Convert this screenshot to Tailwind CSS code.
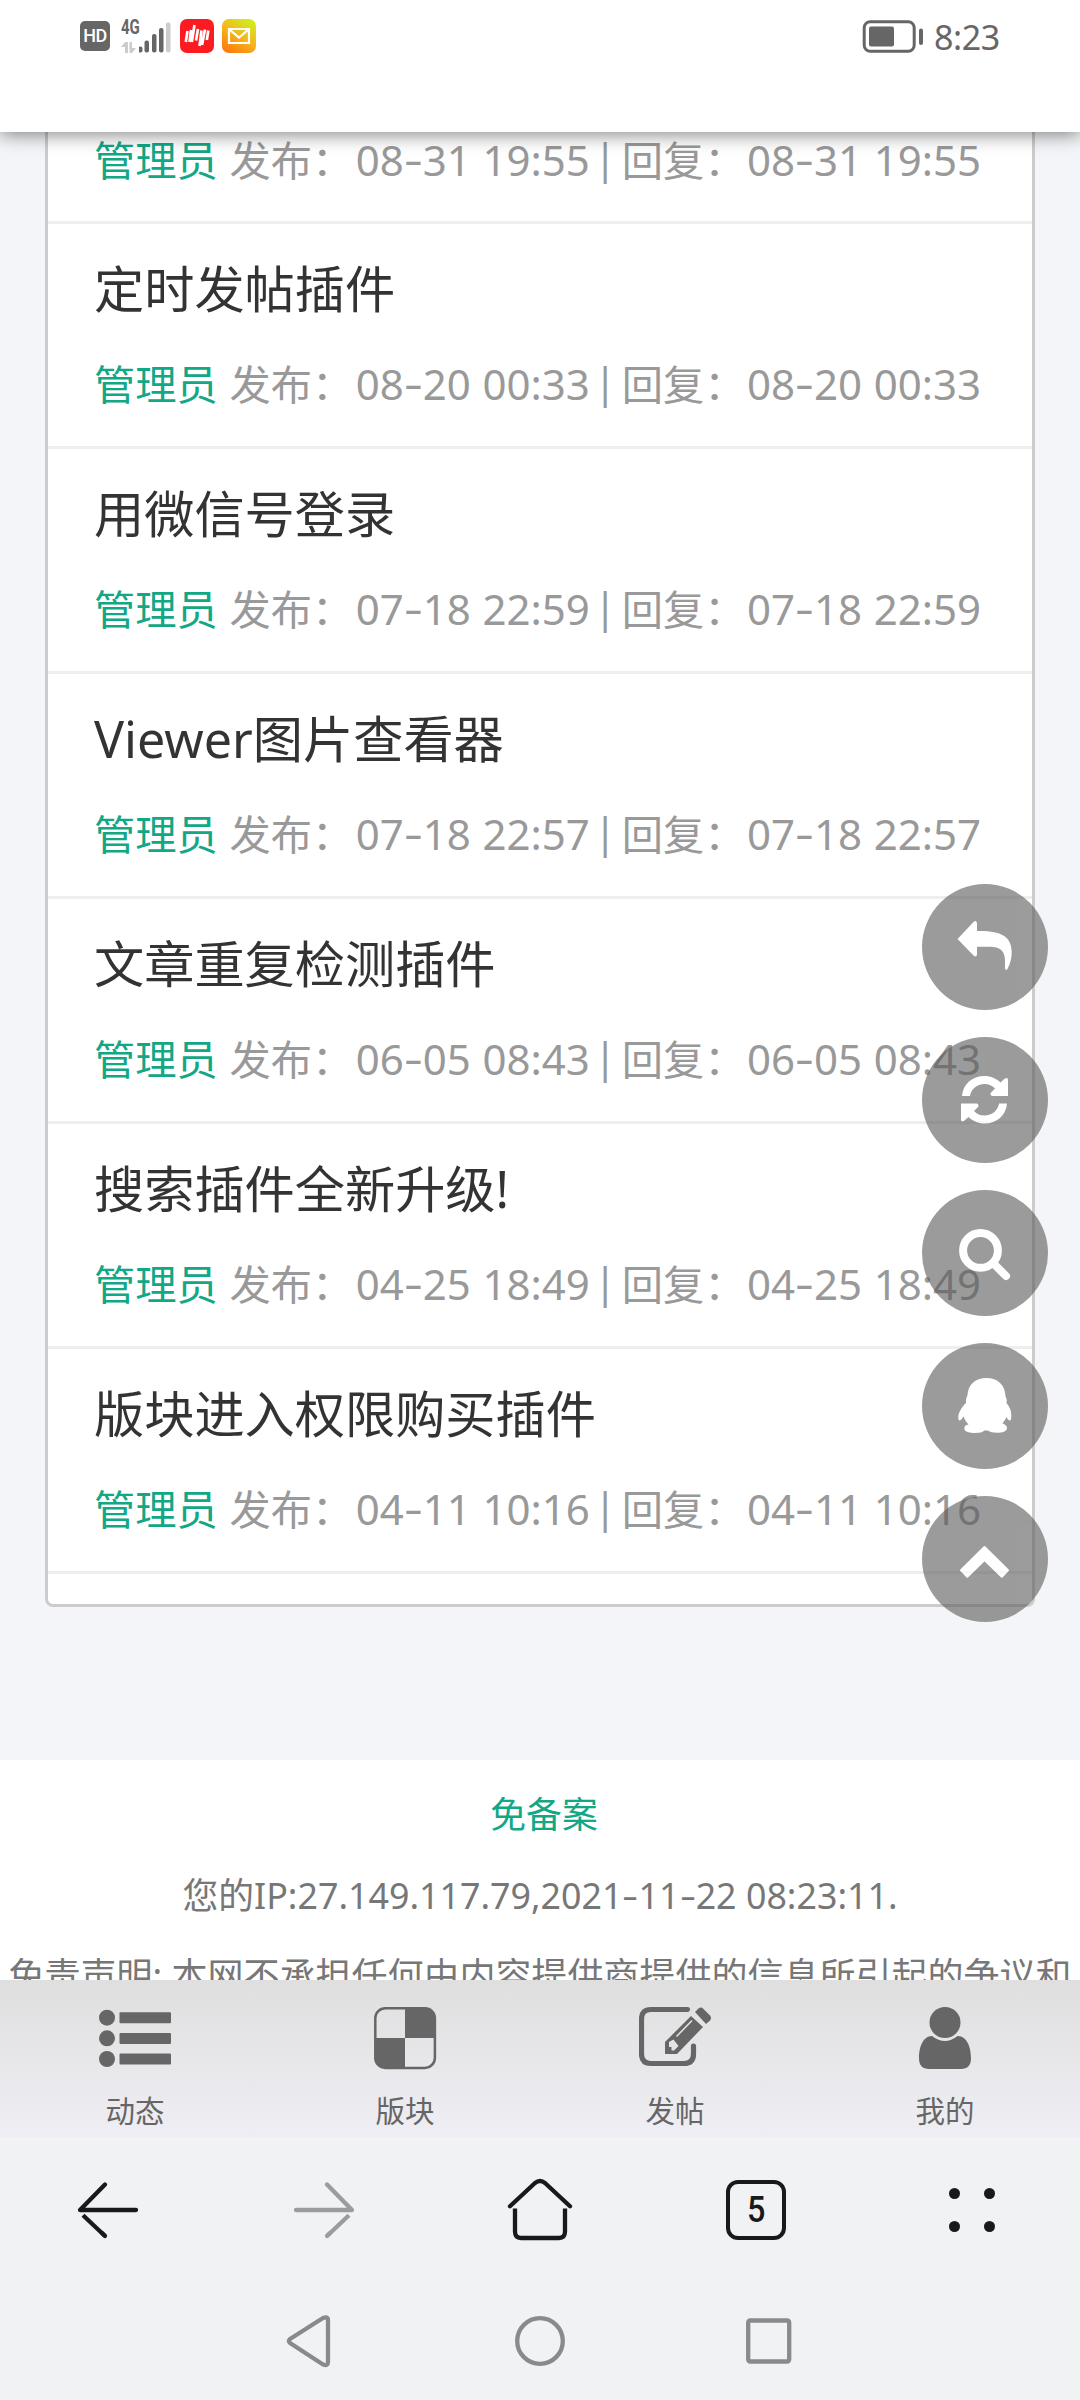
<!DOCTYPE html>
<html lang="zh-CN">
<head>
<meta charset="utf-8">
<title>论坛插件列表</title>
<script src="https://cdn.jsdelivr.net/npm/@tailwindcss/browser@4"></script>
</head>
<body class="bg-[#f1f2f4]">
<div class="relative flex h-[2400px] w-[1080px] flex-col overflow-hidden font-['Noto_Sans','Noto_Sans_CJK_SC',sans-serif]">

  <!-- status bar -->
  <header class="relative z-10 h-[132px] shrink-0 bg-white shadow-[0_2px_18px_rgba(0,0,0,0.5)]">
    <div class="flex h-[72px] items-center justify-between pl-20 pr-[80px]">
      <div class="flex items-center">
        <div class="flex h-[30px] w-[30px] items-center justify-center rounded-[5px] bg-[#666] font-['Roboto',sans-serif] text-[18px] font-medium leading-none tracking-tight text-white">HD</div>
        <div class="ml-[11px] flex h-[34px] w-[50px] items-end">
          <div class="flex h-[33px] w-[18px] flex-col justify-between">
            <span class="inline-block origin-left scale-x-[.75] font-['Roboto',sans-serif] text-[20px] font-bold leading-[15px] text-[#666]">4G</span>
            <svg class="h-[11px] w-[15px]" viewBox="0 0 15 11" fill="#ccc"><path d="M4 0v11h3V0zM0 5L4 0v5zM8.500 0h2.500v11H8.500zM11 6h4l-4 5z"/></svg>
          </div>
          <svg class="h-[32px] w-[32px]" viewBox="0 0 32 32" fill="#666"><rect x="-1" y="25.500" width="4.500" height="6" rx="2"/><rect x="5.500" y="19.500" width="4.500" height="12" rx="2"/><rect x="13" y="13" width="4.500" height="18.500" rx="2"/><rect x="20" y="7" width="4.500" height="24.500" rx="2"/><rect x="27" y="1.500" width="4.500" height="30" rx="2" fill="#ccc"/></svg>
        </div>
        <svg class="ml-[9px] h-[34px] w-[34px]" viewBox="0 0 34 34"><rect width="34" height="34" rx="7" fill="#fb1b20"/><g stroke="#fff" stroke-width="2.700" fill="none"><path d="M7.500 12L5.800 23M11 11L9.500 23M14.500 6L11.800 23M18 10L16 21.500M21.500 11.500L19.500 27M25 10.500L22 26M28.300 11.500L26.800 21"/></g></svg>
        <svg class="ml-2 h-[34px] w-[34px]" viewBox="0 0 34 34"><defs><linearGradient id="mail" x1="0.800" y1="0" x2="0.200" y2="1"><stop offset="0" stop-color="#cdf01e"/><stop offset=".5" stop-color="#f8b518"/><stop offset="1" stop-color="#fb7a10"/></linearGradient></defs><rect width="34" height="34" rx="7" fill="url(#mail)"/><path d="M7 10h20v14H7zM8 11l9 7.500L26 11" fill="none" stroke="#fff" stroke-width="2.200"/></svg>
      </div>
      <div class="flex items-center">
        <svg class="h-[34px] w-[62px]" viewBox="0 0 62 34"><rect x="3.200" y="2.700" width="50" height="29.500" rx="6" fill="none" stroke="#666" stroke-width="3"/><rect x="8" y="7.500" width="25" height="20" rx="2" fill="#666"/><rect x="58" y="9.500" width="4" height="16.500" rx="2" fill="#666"/></svg>
        <span class="ml-[11px] mt-[2px] w-[66px] whitespace-nowrap text-[34px] leading-[48px] tracking-[-0.4px] text-[#666]">8:23</span>
      </div>
    </div>
  </header>

  <!-- page content -->
  <main class="flex h-[1848px] shrink-0 flex-col overflow-hidden bg-[#f4f5f8]">
    <section id="posts" class="mx-[45px] h-[1475px] shrink-0 rounded-b-[8px] border-x-[3px] border-b-[3px] border-[#ccc] bg-white"></section>
    <footer class="mt-[153px] flex h-[300px] shrink-0 flex-col items-center whitespace-nowrap bg-white pt-[14px] text-[35.8px] leading-[81.500px] text-[#777]">
      <a class="pl-[8px] text-[#12a785]">免备案</a>
      <p id="ip" class="-mt-px">您的IP:27.149.117.79,2021-11-22 08:23:11.</p>
      <p class="-mt-px text-[36px]">免责声明: 本网不承担任何由内容提供商提供的信息所引起的争议和</p>
    </footer>
  </main>

  <!-- site tab bar -->
  <nav class="grid h-[157px] shrink-0 grid-cols-4 bg-linear-to-b from-[#dfdfdf] to-[#efeef4] text-[29.500px] leading-[40px] text-[#666]">
    <a class="flex flex-col items-center pt-[25px]">
      <svg class="h-[66px] w-[72px]" viewBox="0 0 72 66" fill="#666"><circle cx="8" cy="12.700" r="8"/><circle cx="8" cy="33.300" r="8"/><circle cx="8" cy="54" r="8"/><rect x="20.500" y="7.300" width="51.500" height="11" rx="1"/><rect x="20.500" y="28" width="51.500" height="11" rx="1"/><rect x="20.500" y="48.500" width="51.500" height="11" rx="1"/></svg>
      <span class="mt-[20px]">动态</span></a>
    <a class="flex flex-col items-center pt-[25px]">
      <svg class="h-[66px] w-[72px]" viewBox="0 0 72 66"><rect x="6.300" y="3.300" width="59.600" height="59.600" rx="10" fill="none" stroke="#666" stroke-width="2.500"/><path d="M36 2.500H56a10 10 0 0 1 10 10V33H36zM36 33V63H16a10 10 0 0 1-10-10V33z" fill="#666"/></svg>
      <span class="mt-[20px]">版块</span></a>
    <a class="flex flex-col items-center pt-[25px]">
      <svg class="h-[66px] w-[72px]" viewBox="0 0 72 66"><path d="M48.500 4.500H12Q2.500 4.500 2.500 14V49Q2.500 58.500 12 58.500H45Q54.500 58.500 54.500 49V41" fill="none" stroke="#666" stroke-width="5.200" stroke-linecap="round"/><path d="M52 11L64 22 38 49H26V37z" fill="#666"/><path d="M56 7L59.500 3.500Q62 1.500 64.500 4L71 10.500Q73 13 71 15.500L67 19z" fill="#666"/><path d="M34.500 34.500l5 6.500-4.500 4.500h-2.500v-3.500H30V37z" fill="#e4e4e5"/><path d="M37.500 31.500L53 15.500" stroke="#e4e4e5" stroke-width="1.500"/><path d="M48 8.500l5-5.500v5z" fill="#dfdfdf"/></svg>
      <span class="mt-[20px]">发帖</span></a>
    <a class="flex flex-col items-center pt-[25px]">
      <svg class="h-[66px] w-[72px]" viewBox="0 0 72 66" fill="#666"><circle cx="36" cy="17.500" r="15.500"/><path d="M23 31Q36 41 48.500 31C58 31 62 42 62 53Q62 64 52 64H20Q10 64 10 53C10 42 14 31 23 31z"/></svg>
      <span class="mt-[20px]">我的</span></a>
  </nav>

  <!-- browser toolbar -->
  <div class="grid h-[146px] shrink-0 grid-cols-5 items-center justify-items-center text-[#18191a]">
    <svg class="h-16 w-16" viewBox="0 0 64 64" fill="none" stroke="currentColor" stroke-width="4.300" stroke-linecap="round" stroke-linejoin="round"><path d="M60 32H4L29 6.500"/><path d="M29 58L7 37.300" stroke-linecap="butt"/><path d="M29 58l-3-3"/></svg>
    <svg class="h-16 w-16 text-[#9b9c9e]" viewBox="0 0 64 64" fill="none" stroke="currentColor" stroke-width="4.300" stroke-linecap="round" stroke-linejoin="round"><path d="M4 32H60L35 6.500"/><path d="M35 58L57 37.300" stroke-linecap="butt"/><path d="M35 58l3-3"/></svg>
    <svg class="h-16 w-[68px]" viewBox="0 0 68 64" fill="none" stroke="currentColor" stroke-width="4.300" stroke-linecap="round" stroke-linejoin="round"><path d="M4 28.300L29 5Q34 1 39 5L64 28.300"/><path d="M9 30.500V53.500Q9 60 15 60H53Q59 60 59 53.500V30.500" stroke-linecap="butt"/></svg>
    <div class="flex h-[60px] w-[60px] items-center justify-center rounded-[12px] border-[4px] border-current font-['Roboto',sans-serif] text-[36px] font-medium leading-none"><span class="scale-x-90">5</span></div>
    <div class="grid grid-cols-2 gap-x-6 gap-y-[22px]"><i class="h-[11px] w-[11px] rounded-full bg-current"></i><i class="h-[11px] w-[11px] rounded-full bg-current"></i><i class="h-[11px] w-[11px] rounded-full bg-current"></i><i class="h-[11px] w-[11px] rounded-full bg-current"></i></div>
  </div>

  <!-- system navigation -->
  <div class="flex h-[115px] shrink-0 items-center justify-between px-[280px]">
    <svg class="h-[54px] w-[56px]" viewBox="0 0 56 54" fill="none" stroke="#8a8a8a" stroke-width="4.300" stroke-linejoin="round"><path d="M10 25Q8 27 10 29L43 50.500Q48 52.500 48 48V6Q48 2 43 4z"/></svg>
    <svg class="h-[54px] w-[56px]" viewBox="0 0 56 54" fill="none" stroke="#8a8a8a" stroke-width="4.300"><circle cx="28" cy="27" r="22.800"/></svg>
    <svg class="h-[54px] w-[56px]" viewBox="0 0 56 54" fill="none" stroke="#8a8a8a" stroke-width="4.300"><rect x="4.200" y="6.500" width="41" height="41" rx="2"/></svg>
  </div>

  <!-- floating action buttons -->
  <div class="absolute left-[922px] top-[884px] z-20 flex flex-col gap-[27px] text-white opacity-60">
    <button class="h-[126px] w-[126px] rounded-full bg-[#5a5a5a]"><svg viewBox="0 0 126 126" fill="currentColor"><path d="M35.500 55L51.500 38Q55 35.500 55 40V47C80 46.500 89.700 53 89.700 68C89.700 74 88.500 79 85.500 85Q83.500 87.500 83 84C84 68 81 62.700 66 62.700H55V70Q55 74 51.500 71.500z"/></svg></button>
    <button class="h-[126px] w-[126px] rounded-full bg-[#5a5a5a]"><svg viewBox="0 0 126 126" fill="currentColor"><path id="arc" d="M40 59C41 47 50 39 62.500 39C69 39 74 41.500 78.500 45.500L82.500 41.800Q86 39.500 86 43V59H70Q67.500 57.500 69 55.500L73 51.500C70 48.500 67 47 62.500 47C55 47 49 52 48 59z"/><use href="#arc" transform="rotate(180 62.500 62.700)"/></svg></button>
    <button class="h-[126px] w-[126px] rounded-full bg-[#5a5a5a]"><svg viewBox="0 0 126 126" fill="none" stroke="currentColor" stroke-width="8" stroke-linecap="round"><circle cx="58.500" cy="60.400" r="17.400"/><path d="M71.500 73.500L84 86"/></svg></button>
    <button class="h-[126px] w-[126px] rounded-full bg-[#5a5a5a]"><svg viewBox="0 0 126 126" fill="currentColor"><path d="M64.300 35C53 35 46 42 45.500 52Q43.500 56 44 60C39 65 36.300 70 36.300 74Q36.300 78 38 77.500Q40 76 41.500 73.500Q43 78 46.500 81.500Q42.300 82 42.300 85.500C42.300 89 48 90 53 90Q60 90 62.500 87.500H65.500Q69 89.700 75 89.700C80 89.700 85 88.500 85 85Q85 82 80.500 80.500Q83 77.500 84.500 74Q86 77.500 88 77.500Q89.500 77 89.300 72C89.300 67 87 63 84.500 60Q85.500 57 83.500 53C83 42 76 35 64.300 35z"/></svg></button>
    <button class="h-[126px] w-[126px] rounded-full bg-[#5a5a5a]"><svg viewBox="0 0 126 126" fill="currentColor" stroke="currentColor" stroke-width="2" stroke-linejoin="round"><path d="M62.500 51L86 74.300 79.800 80.700 62.500 64 45.300 80.700 39 74.300z"/></svg></button>
  </div>
</div>

<script>
  const posts = [
    [null, '08-31', '19:55'],
    ['定时发帖插件', '08-20', '00:33'],
    ['用微信号登录', '07-18', '22:59'],
    ['Viewer图片查看器', '07-18', '22:57'],
    ['文章重复检测插件', '06-05', '08:43'],
    ['搜索插件全新升级!', '04-25', '18:49'],
    ['版块进入权限购买插件', '04-11', '10:16'],
  ];
  // wide, slightly raised hyphen between digits
  const dash = s => s.replaceAll('-', '<span class="inline-block w-[.45em] -translate-y-[.03em] scale-x-140 text-center">-</span>');
  const stamp = (d, t) => `<span class="flex w-[240px] justify-between pr-[5px] text-[42px]"><span>${dash(d)}</span><span>${t}</span></span>`;
  const meta = (d, t) => `<div class="flex h-[60px] items-baseline whitespace-nowrap text-[41.3px] leading-[60px] text-[#999]">
      <span class="w-[136px] text-[#12a785]">管理员</span><span class="w-[127px]">发布：</span>${stamp(d, t)}<span class="w-[27px] -translate-x-px -translate-y-[2px]">|</span><span class="w-[126px]">回复：</span>${stamp(d, t)}</div>`;
  document.getElementById('posts').innerHTML = posts.map(([title, d, t]) => title
    ? `<article class="h-[225px] border-b-[3px] border-[#eee] px-[46px] pt-[30px]"><h2 class="mb-[30px] h-[70px] whitespace-nowrap text-[50.2px] leading-[70px] text-[#333]">${title}</h2>${meta(d, t)}</article>`
    : `<article class="h-[92px] border-b-[3px] border-[#eee] px-[46px]"><div class="-translate-y-[2px]">${meta(d, t)}</div></article>`).join('');
  const ip = document.getElementById('ip');
  ip.innerHTML = dash(ip.textContent);
</script>
</body>
</html>
